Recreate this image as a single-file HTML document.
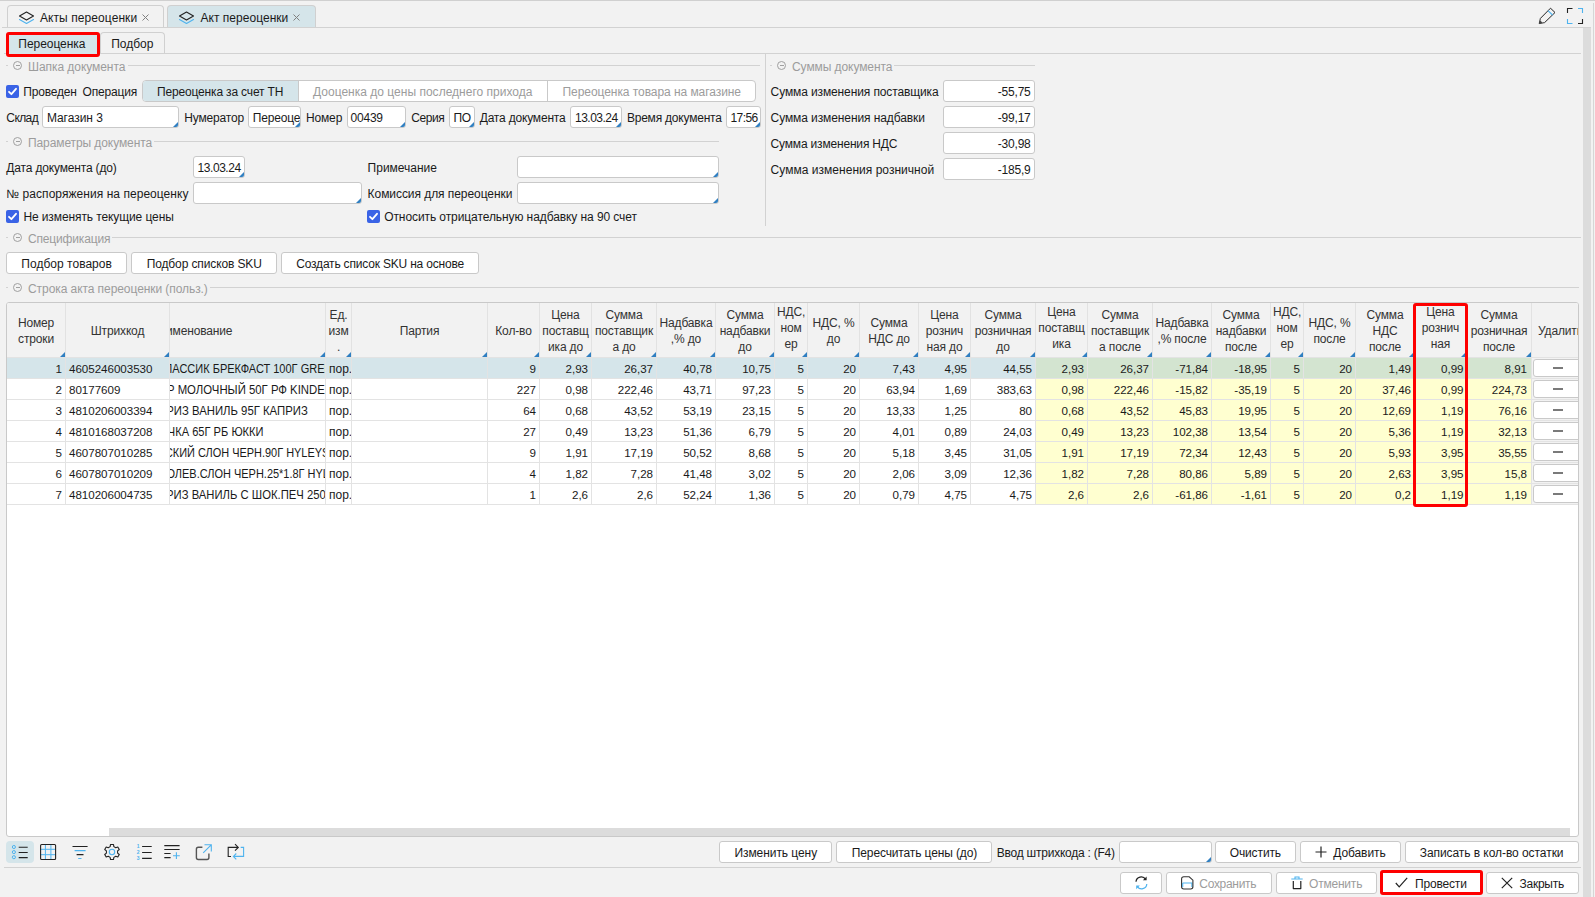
<!DOCTYPE html><html lang="ru"><head><meta charset="utf-8"><title>Акт переоценки</title><style>
*{box-sizing:border-box;margin:0;padding:0}
html,body{width:1595px;height:897px;overflow:hidden;background:#f2f2f2}
body{font-family:"Liberation Sans",sans-serif;font-size:12px;color:#1a1a1a;position:relative}
.a{position:absolute;white-space:nowrap}
.t{position:absolute;white-space:pre;line-height:16px;height:16px}
.g{color:#9c9c9c}
.hl{position:absolute;height:1px;background:#d2d2d2}
.vl{position:absolute;width:1px;background:#d2d2d2}
.in{position:absolute;background:#fff;border:1px solid #c9c9c9;border-radius:3px;height:22px;overflow:hidden}
.in.m:after,.th.m:after{content:"";position:absolute;right:0;bottom:0;border-style:solid;border-width:0 0 5px 5px;border-color:transparent transparent #2f7fc1 transparent}
.btn{position:absolute;background:#fff;border:1px solid #c9c9c9;border-radius:3px;height:22px}
.cb{position:absolute;width:13px;height:13px;border-radius:2px;background:#3a63e6}
.cb svg{position:absolute;left:0;top:0}
.circ{position:absolute;width:9px;height:9px;border:1px solid #a0a0a0;border-radius:50%}
.circ:after{content:"";position:absolute;left:1.5px;top:3px;width:4px;height:1px;background:#a0a0a0}
.th{position:absolute;top:0;height:55px;color:#333;text-align:center;line-height:16px;display:flex;align-items:center;justify-content:center;border-right:1px solid #e2e2e2;border-bottom:1px solid #e3e3e3;overflow:hidden;white-space:nowrap;letter-spacing:-0.15px;padding-top:2px}
.td{position:absolute;height:21px;line-height:22px;border-right:1px solid #e3e3e3;border-bottom:1px solid #e3e3e3;overflow:hidden;white-space:pre;padding:0 3px}
.n{font-size:11.6px;letter-spacing:-0.03px}
.td.r{text-align:right}
.y{background:#ffffd0}
.sel{background:#d5e5ea}
.sel.y{background:#d3e4d0}
.del{position:absolute;left:1px;top:1px;width:60px;height:18px;background:#fff;border:1px solid #c9c9c9;border-radius:3px}
.del:after{content:"";position:absolute;left:19px;top:7px;width:10px;height:2px;background:#7a7a7a}
</style></head><body>
<div class="hl" style="left:0px;top:0px;width:1595px;background:#d0d0d0"></div>
<div class="a" style="left:7px;top:5px;width:157px;height:23px;border:1px solid #d0d0d0;border-bottom:none;border-radius:4px 4px 0 0;background:#f2f2f2"></div>
<svg class="a" style="left:17.5px;top:10.5px" width="17" height="14" viewBox="0 0 17 14"><path d="M8.5 1 L15.5 5 L8.5 9 L1.5 5 Z" fill="none" stroke="#222" stroke-width="1.1" stroke-linejoin="round"/><path d="M1.5 8.5 L8.5 12.5 L15.5 8.5" fill="none" stroke="#4fb3ee" stroke-width="1.1" stroke-linejoin="round" stroke-linecap="round"/></svg>
<div class="t " style="left:40px;top:10px;letter-spacing:0.078px;">Акты переоценки</div>
<svg class="a" style="left:142px;top:14px" width="7" height="7" viewBox="0 0 7 7"><path d="M0.5 0.5 L6.5 6.5 M6.5 0.5 L0.5 6.5" stroke="#808080" stroke-width="1"/></svg>
<div class="a" style="left:167px;top:5px;width:149px;height:23px;border:1px solid #d0d0d0;border-bottom:none;border-radius:4px 4px 0 0;background:#d5e5ea"></div>
<svg class="a" style="left:177.5px;top:10.5px" width="17" height="14" viewBox="0 0 17 14"><path d="M8.5 1 L15.5 5 L8.5 9 L1.5 5 Z" fill="none" stroke="#222" stroke-width="1.1" stroke-linejoin="round"/><path d="M1.5 8.5 L8.5 12.5 L15.5 8.5" fill="none" stroke="#4fb3ee" stroke-width="1.1" stroke-linejoin="round" stroke-linecap="round"/></svg>
<div class="t " style="left:200.5px;top:10px;letter-spacing:0.028px;">Акт переоценки</div>
<svg class="a" style="left:293px;top:14px" width="7" height="7" viewBox="0 0 7 7"><path d="M0.5 0.5 L6.5 6.5 M6.5 0.5 L0.5 6.5" stroke="#808080" stroke-width="1"/></svg>
<div class="hl" style="left:2px;top:27px;width:1589px;"></div>
<svg class="a" style="left:1530px;top:0" width="60" height="28" viewBox="1530 0 60 28"><path d="M1540.4 18.4 L1550.5 8.2 L1555 12.5 L1544.6 22.6" fill="none" stroke="#222" stroke-width="1" stroke-linejoin="miter"/><path d="M1540.4 18.4 L1539.2 23.6 L1544.6 22.6" fill="none" stroke="#333" stroke-width="1" stroke-linejoin="round"/><path d="M1539.3 23.5 L1540 20.6 Q1541.6 21.2 1542.4 22.9 Z" fill="#444"/><path d="M1548 10.7 L1552.5 15" stroke="#4fb3ee" stroke-width="1.1"/><path d="M1567.5 13 V8.5 H1572.5" fill="none" stroke="#222" stroke-width="1.1"/><path d="M1578 8.5 H1582.5 V13" fill="none" stroke="#4fb3ee" stroke-width="1.1"/><path d="M1582.5 19 V23.5 H1578" fill="none" stroke="#222" stroke-width="1.1"/><path d="M1572.5 23.5 H1567.5 V19" fill="none" stroke="#4fb3ee" stroke-width="1.1"/></svg>
<div class="a" style="left:100px;top:32px;width:65px;height:22px;border:1px solid #d0d0d0;border-bottom:none;border-radius:4px 4px 0 0"></div>
<div class="t " style="left:111.2px;top:36px;letter-spacing:0.006px;">Подбор</div>
<div class="hl" style="left:4px;top:53px;width:1577px;"></div>
<div class="a" style="left:6px;top:32px;width:94px;height:25px;border:3px solid #fe0000;border-radius:3px;background:#d5e5ea"></div>
<div class="t " style="left:18.3px;top:36px;letter-spacing:-0.045px;">Переоценка</div>
<div class="a" style="left:1583px;top:28px;width:8px;height:869px;background:#dcdcdc"></div>
<div class="vl" style="left:1593px;top:3px;height:894px;background:#d6d6d6"></div>
<div class="hl" style="left:6px;top:65px;width:2px"></div>
<div class="circ" style="left:13px;top:61px"></div>
<div class="t g" style="left:28px;top:59px;letter-spacing:-0.060px;">Шапка документа</div>
<div class="hl" style="left:128px;top:65px;width:632px;"></div>
<div class="vl" style="left:765px;top:54px;height:172px;"></div>
<div class="hl" style="left:770px;top:65px;width:2px"></div>
<div class="circ" style="left:777px;top:61px"></div>
<div class="t g" style="left:792px;top:59px;letter-spacing:-0.074px;">Суммы документа</div>
<div class="hl" style="left:894px;top:65px;width:141px;"></div>
<div class="cb" style="left:6px;top:85px"><svg width="13" height="13" viewBox="0 0 13 13"><path d="M3 6.8 L5.4 9.2 L10 3.8" fill="none" stroke="#fff" stroke-width="1.8" stroke-linecap="round" stroke-linejoin="round"/></svg></div>
<div class="t " style="left:23.3px;top:84px;letter-spacing:-0.205px;">Проведен</div>
<div class="t " style="left:82.6px;top:84px;letter-spacing:-0.167px;">Операция</div>
<div class="a" style="left:142px;top:80px;width:614px;height:22px;border:1px solid #c9c9c9;border-radius:4px;background:#fff;overflow:hidden"><div class="a" style="left:0;top:0;width:156px;height:20px;background:#d5e5ea;border-right:1px solid #c9c9c9"></div><div class="a" style="left:404px;top:0;width:1px;height:20px;background:#c9c9c9"></div></div>
<div class="t " style="left:157px;top:84px;letter-spacing:-0.162px;">Переоценка за счет ТН</div>
<div class="t g" style="left:313px;top:84px;letter-spacing:0.014px;">Дооценка до цены последнего прихода</div>
<div class="t g" style="left:562.5px;top:84px;letter-spacing:-0.060px;">Переоценка товара на магазине</div>
<div class="t " style="left:6.3px;top:110px;letter-spacing:-0.587px;">Склад</div>
<div class="in m" style="left:42px;top:106px;width:137px"></div>
<div class="a" style="left:43px;top:106px;width:135px;height:22px;overflow:hidden">
<div class="t" style="left:3.8999999999999986px;top:4px;letter-spacing:-0.044px;">Магазин 3</div></div>
<div class="t " style="left:184.3px;top:110px;letter-spacing:-0.172px;">Нумератор</div>
<div class="in m" style="left:248px;top:106px;width:53px"></div>
<div class="a" style="left:249px;top:106px;width:51px;height:22px;overflow:hidden"><div class="t" style="left:3.7px;top:4px;letter-spacing:-0.176px">Переоценка</div></div>
<div class="t " style="left:305.9px;top:110px;letter-spacing:-0.127px;">Номер</div>
<div class="in m" style="left:347px;top:106px;width:59px"></div>
<div class="a" style="left:348px;top:106px;width:57px;height:22px;overflow:hidden">
<div class="t" style="left:2.5px;top:4px;letter-spacing:-0.215px;">00439</div></div>
<div class="t " style="left:411.3px;top:110px;letter-spacing:-0.424px;">Серия</div>
<div class="in m" style="left:449px;top:106px;width:26px"></div>
<div class="a" style="left:450px;top:106px;width:24px;height:22px;overflow:hidden">
<div class="t" style="left:3.3999999999999773px;top:4px;letter-spacing:-0.184px;">ПО</div></div>
<div class="t " style="left:479.7px;top:110px;letter-spacing:-0.187px;">Дата документа</div>
<div class="in m" style="left:570px;top:106px;width:52px"></div>
<div class="a" style="left:571px;top:106px;width:50px;height:22px;overflow:hidden">
<div class="t" style="left:4px;top:4px;letter-spacing:-0.515px;">13.03.24</div></div>
<div class="t " style="left:626.9px;top:110px;letter-spacing:-0.210px;">Время документа</div>
<div class="in m" style="left:726px;top:106px;width:35px"></div>
<div class="a" style="left:727px;top:106px;width:33px;height:22px;overflow:hidden">
<div class="t" style="left:3.3999999999999773px;top:4px;letter-spacing:-0.546px;">17:56</div></div>
<div class="hl" style="left:6px;top:141px;width:2px"></div>
<div class="circ" style="left:13px;top:137px"></div>
<div class="t g" style="left:28px;top:135px;letter-spacing:-0.095px;">Параметры документа</div>
<div class="hl" style="left:154px;top:141px;width:565px;"></div>
<div class="t " style="left:6.3px;top:160px;letter-spacing:-0.164px;">Дата документа (до)</div>
<div class="in m" style="left:193px;top:156px;width:52px"></div>
<div class="a" style="left:194px;top:156px;width:50px;height:22px;overflow:hidden">
<div class="t" style="left:3.5999999999999943px;top:4px;letter-spacing:-0.452px;">13.03.24</div></div>
<div class="t " style="left:367.6px;top:160px;letter-spacing:-0.007px;">Примечание</div>
<div class="in m" style="left:517px;top:156px;width:202px"></div>
<div class="t " style="left:6.3px;top:186px;letter-spacing:0.047px;">№ распоряжения на переоценку</div>
<div class="in m" style="left:193px;top:182px;width:169px"></div>
<div class="t " style="left:367.6px;top:186px;letter-spacing:-0.060px;">Комиссия для переоценки</div>
<div class="in m" style="left:517px;top:182px;width:202px"></div>
<div class="cb" style="left:6px;top:210px"><svg width="13" height="13" viewBox="0 0 13 13"><path d="M3 6.8 L5.4 9.2 L10 3.8" fill="none" stroke="#fff" stroke-width="1.8" stroke-linecap="round" stroke-linejoin="round"/></svg></div>
<div class="t " style="left:23.4px;top:209px;letter-spacing:-0.099px;">Не изменять текущие цены</div>
<div class="cb" style="left:367px;top:210px"><svg width="13" height="13" viewBox="0 0 13 13"><path d="M3 6.8 L5.4 9.2 L10 3.8" fill="none" stroke="#fff" stroke-width="1.8" stroke-linecap="round" stroke-linejoin="round"/></svg></div>
<div class="t " style="left:384.2px;top:209px;letter-spacing:-0.084px;">Относить отрицательную надбавку на 90 счет</div>
<div class="t " style="left:770.6px;top:84px;letter-spacing:-0.115px;">Сумма изменения поставщика</div>
<div class="in " style="left:943px;top:80px;width:92px"></div>
<div class="t" style="left:944px;top:84px;width:86.6px;text-align:right;letter-spacing:-0.2px">-55,75</div>
<div class="t " style="left:770.6px;top:110px;letter-spacing:-0.098px;">Сумма изменения надбавки</div>
<div class="in " style="left:943px;top:106px;width:92px"></div>
<div class="t" style="left:944px;top:110px;width:86.6px;text-align:right;letter-spacing:-0.2px">-99,17</div>
<div class="t " style="left:770.6px;top:136px;letter-spacing:-0.179px;">Сумма изменения НДС</div>
<div class="in " style="left:943px;top:132px;width:92px"></div>
<div class="t" style="left:944px;top:136px;width:86.6px;text-align:right;letter-spacing:-0.2px">-30,98</div>
<div class="t " style="left:770.6px;top:162px;letter-spacing:0.027px;">Сумма изменения розничной</div>
<div class="in " style="left:943px;top:158px;width:92px"></div>
<div class="t" style="left:944px;top:162px;width:86.6px;text-align:right;letter-spacing:-0.2px">-185,9</div>
<div class="hl" style="left:6px;top:237px;width:2px"></div>
<div class="circ" style="left:13px;top:233px"></div>
<div class="t g" style="left:28px;top:231px;letter-spacing:-0.164px;">Спецификация</div>
<div class="hl" style="left:112px;top:237px;width:1469px;"></div>
<div class="btn" style="left:6px;top:252px;width:121px"></div>
<div class="t " style="left:21.3px;top:256px;letter-spacing:0.024px;">Подбор товаров</div>
<div class="btn" style="left:131px;top:252px;width:146px"></div>
<div class="t " style="left:146.7px;top:256px;letter-spacing:-0.119px;">Подбор списков SKU</div>
<div class="btn" style="left:281px;top:252px;width:198px"></div>
<div class="t " style="left:296.2px;top:256px;letter-spacing:-0.188px;">Создать список SKU на основе</div>
<div class="hl" style="left:6px;top:287px;width:2px"></div>
<div class="circ" style="left:13px;top:283px"></div>
<div class="t g" style="left:28px;top:281px;letter-spacing:-0.070px;">Строка акта переоценки (польз.)</div>
<div class="hl" style="left:210px;top:287px;width:1369px;"></div>
<div class="a" style="left:6px;top:302px;width:1573px;height:535px;border:1px solid #c9c9c9;border-radius:3px;background:#fff;overflow:hidden">
<div class="a" style="left:0;top:0;width:1573px;height:55px;background:#f2f2f2"></div>
<div class="th m" style="left:0px;width:59px;">Номер<br>строки</div>
<div class="th m" style="left:59px;width:104px;">Штрихкод</div>
<div class="th m" style="left:163px;width:156px;justify-content:flex-start"><span style="margin-left:-19px">Наименование</span></div>
<div class="th m" style="left:319px;width:26px;">Ед.<br>изм<br>.</div>
<div class="th m" style="left:345px;width:136px;">Партия</div>
<div class="th m" style="left:481px;width:52px;">Кол-во</div>
<div class="th m" style="left:533px;width:52px;">Цена<br>поставщ<br>ика до</div>
<div class="th m" style="left:585px;width:65px;">Сумма<br>поставщик<br>а до</div>
<div class="th m" style="left:650px;width:59px;">Надбавка<br>,% до</div>
<div class="th m" style="left:709px;width:59px;">Сумма<br>надбавки<br>до</div>
<div class="th m" style="left:768px;width:33px;padding-bottom:6px;">НДС,<br>ном<br>ер</div>
<div class="th m" style="left:801px;width:52px;">НДС, %<br>до</div>
<div class="th m" style="left:853px;width:59px;">Сумма<br>НДС до</div>
<div class="th m" style="left:912px;width:52px;">Цена<br>рознич<br>ная до</div>
<div class="th m" style="left:964px;width:65px;">Сумма<br>розничная<br>до</div>
<div class="th m" style="left:1029px;width:52px;padding-bottom:6px;">Цена<br>поставщ<br>ика</div>
<div class="th m" style="left:1081px;width:65px;">Сумма<br>поставщик<br>а после</div>
<div class="th m" style="left:1146px;width:59px;">Надбавка<br>,% после</div>
<div class="th m" style="left:1205px;width:59px;">Сумма<br>надбавки<br>после</div>
<div class="th m" style="left:1264px;width:33px;padding-bottom:6px;">НДС,<br>ном<br>ер</div>
<div class="th m" style="left:1297px;width:52px;">НДС, %<br>после</div>
<div class="th m" style="left:1349px;width:59px;">Сумма<br>НДС<br>после</div>
<div class="th m" style="left:1408px;width:52px;padding-bottom:6px;">Цена<br>рознич<br>ная</div>
<div class="th m" style="left:1460px;width:65px;">Сумма<br>розничная<br>после</div>
<div class="th" style="left:1525px;width:60px;border-right:none;justify-content:flex-start;padding-left:6px">Удалить</div>
<div class="td sel r n" style="left:0px;top:55px;width:59px;">1</div>
<div class="td sel n" style="left:59px;top:55px;width:104px;padding:0 0 0 3px">4605246003530</div>
<div class="td sel" style="left:163px;top:55px;width:156px;padding:0"><span style="display:inline-block;transform-origin:0 50%;transform:scaleX(0.9176);margin-left:-37.30px">ЧАЙ КЛАССИК БРЕКФАСТ 100Г GREENFIELD</span></div>
<div class="td sel" style="left:319px;top:55px;width:26px;padding:0 0 0 3px">пор.</div>
<div class="td sel r n" style="left:345px;top:55px;width:136px;"></div>
<div class="td sel r n" style="left:481px;top:55px;width:52px;">9</div>
<div class="td sel r n" style="left:533px;top:55px;width:52px;">2,93</div>
<div class="td sel r n" style="left:585px;top:55px;width:65px;">26,37</div>
<div class="td sel r n" style="left:650px;top:55px;width:59px;">40,78</div>
<div class="td sel r n" style="left:709px;top:55px;width:59px;">10,75</div>
<div class="td sel r n" style="left:768px;top:55px;width:33px;">5</div>
<div class="td sel r n" style="left:801px;top:55px;width:52px;">20</div>
<div class="td sel r n" style="left:853px;top:55px;width:59px;">7,43</div>
<div class="td sel r n" style="left:912px;top:55px;width:52px;">4,95</div>
<div class="td sel r n" style="left:964px;top:55px;width:65px;">44,55</div>
<div class="td sel y r n" style="left:1029px;top:55px;width:52px;">2,93</div>
<div class="td sel y r n" style="left:1081px;top:55px;width:65px;">26,37</div>
<div class="td sel y r n" style="left:1146px;top:55px;width:59px;">-71,84</div>
<div class="td sel y r n" style="left:1205px;top:55px;width:59px;">-18,95</div>
<div class="td sel y r n" style="left:1264px;top:55px;width:33px;">5</div>
<div class="td sel y r n" style="left:1297px;top:55px;width:52px;">20</div>
<div class="td sel y r n" style="left:1349px;top:55px;width:59px;">1,49</div>
<div class="td sel y r n" style="left:1408px;top:55px;width:52px;padding-right:2.5px;">0,99</div>
<div class="td sel y r n" style="left:1460px;top:55px;width:65px;padding-right:4px;">8,91</div>
<div class="td sel" style="left:1525px;top:55px;width:60px;border-right:none;background:#f2f2f2"><div class="del"></div></div>
<div class="td r n" style="left:0px;top:76px;width:59px;">2</div>
<div class="td n" style="left:59px;top:76px;width:104px;padding:0 0 0 3px">80177609</div>
<div class="td" style="left:163px;top:76px;width:156px;padding:0"><span style="display:inline-block;transform-origin:0 50%;transform:scaleX(0.9461);margin-left:-102.33px">ШОКОЛАД КИНДЕР МОЛОЧНЫЙ 50Г РФ KINDER</span></div>
<div class="td" style="left:319px;top:76px;width:26px;padding:0 0 0 3px">пор.</div>
<div class="td r n" style="left:345px;top:76px;width:136px;"></div>
<div class="td r n" style="left:481px;top:76px;width:52px;">227</div>
<div class="td r n" style="left:533px;top:76px;width:52px;">0,98</div>
<div class="td r n" style="left:585px;top:76px;width:65px;">222,46</div>
<div class="td r n" style="left:650px;top:76px;width:59px;">43,71</div>
<div class="td r n" style="left:709px;top:76px;width:59px;">97,23</div>
<div class="td r n" style="left:768px;top:76px;width:33px;">5</div>
<div class="td r n" style="left:801px;top:76px;width:52px;">20</div>
<div class="td r n" style="left:853px;top:76px;width:59px;">63,94</div>
<div class="td r n" style="left:912px;top:76px;width:52px;">1,69</div>
<div class="td r n" style="left:964px;top:76px;width:65px;">383,63</div>
<div class="td y r n" style="left:1029px;top:76px;width:52px;">0,98</div>
<div class="td y r n" style="left:1081px;top:76px;width:65px;">222,46</div>
<div class="td y r n" style="left:1146px;top:76px;width:59px;">-15,82</div>
<div class="td y r n" style="left:1205px;top:76px;width:59px;">-35,19</div>
<div class="td y r n" style="left:1264px;top:76px;width:33px;">5</div>
<div class="td y r n" style="left:1297px;top:76px;width:52px;">20</div>
<div class="td y r n" style="left:1349px;top:76px;width:59px;">37,46</div>
<div class="td y r n" style="left:1408px;top:76px;width:52px;padding-right:2.5px;">0,99</div>
<div class="td y r n" style="left:1460px;top:76px;width:65px;padding-right:4px;">224,73</div>
<div class="td" style="left:1525px;top:76px;width:60px;border-right:none;background:#f2f2f2"><div class="del"></div></div>
<div class="td r n" style="left:0px;top:97px;width:59px;">3</div>
<div class="td n" style="left:59px;top:97px;width:104px;padding:0 0 0 3px">4810206003394</div>
<div class="td" style="left:163px;top:97px;width:156px;padding:0"><span style="display:inline-block;transform-origin:0 50%;transform:scaleX(0.9447);margin-left:-70.07px">СЫРОК КАПРИЗ ВАНИЛЬ 95Г КАПРИЗ</span></div>
<div class="td" style="left:319px;top:97px;width:26px;padding:0 0 0 3px">пор.</div>
<div class="td r n" style="left:345px;top:97px;width:136px;"></div>
<div class="td r n" style="left:481px;top:97px;width:52px;">64</div>
<div class="td r n" style="left:533px;top:97px;width:52px;">0,68</div>
<div class="td r n" style="left:585px;top:97px;width:65px;">43,52</div>
<div class="td r n" style="left:650px;top:97px;width:59px;">53,19</div>
<div class="td r n" style="left:709px;top:97px;width:59px;">23,15</div>
<div class="td r n" style="left:768px;top:97px;width:33px;">5</div>
<div class="td r n" style="left:801px;top:97px;width:52px;">20</div>
<div class="td r n" style="left:853px;top:97px;width:59px;">13,33</div>
<div class="td r n" style="left:912px;top:97px;width:52px;">1,25</div>
<div class="td r n" style="left:964px;top:97px;width:65px;">80</div>
<div class="td y r n" style="left:1029px;top:97px;width:52px;">0,68</div>
<div class="td y r n" style="left:1081px;top:97px;width:65px;">43,52</div>
<div class="td y r n" style="left:1146px;top:97px;width:59px;">45,83</div>
<div class="td y r n" style="left:1205px;top:97px;width:59px;">19,95</div>
<div class="td y r n" style="left:1264px;top:97px;width:33px;">5</div>
<div class="td y r n" style="left:1297px;top:97px;width:52px;">20</div>
<div class="td y r n" style="left:1349px;top:97px;width:59px;">12,69</div>
<div class="td y r n" style="left:1408px;top:97px;width:52px;padding-right:2.5px;">1,19</div>
<div class="td y r n" style="left:1460px;top:97px;width:65px;padding-right:4px;">76,16</div>
<div class="td" style="left:1525px;top:97px;width:60px;border-right:none;background:#f2f2f2"><div class="del"></div></div>
<div class="td r n" style="left:0px;top:118px;width:59px;">4</div>
<div class="td n" style="left:59px;top:118px;width:104px;padding:0 0 0 3px">4810168037208</div>
<div class="td" style="left:163px;top:118px;width:156px;padding:0"><span style="display:inline-block;transform-origin:0 50%;transform:scaleX(0.9251);margin-left:-25.82px">ЖВАЧКА 65Г РБ ЮККИ</span></div>
<div class="td" style="left:319px;top:118px;width:26px;padding:0 0 0 3px">пор.</div>
<div class="td r n" style="left:345px;top:118px;width:136px;"></div>
<div class="td r n" style="left:481px;top:118px;width:52px;">27</div>
<div class="td r n" style="left:533px;top:118px;width:52px;">0,49</div>
<div class="td r n" style="left:585px;top:118px;width:65px;">13,23</div>
<div class="td r n" style="left:650px;top:118px;width:59px;">51,36</div>
<div class="td r n" style="left:709px;top:118px;width:59px;">6,79</div>
<div class="td r n" style="left:768px;top:118px;width:33px;">5</div>
<div class="td r n" style="left:801px;top:118px;width:52px;">20</div>
<div class="td r n" style="left:853px;top:118px;width:59px;">4,01</div>
<div class="td r n" style="left:912px;top:118px;width:52px;">0,89</div>
<div class="td r n" style="left:964px;top:118px;width:65px;">24,03</div>
<div class="td y r n" style="left:1029px;top:118px;width:52px;">0,49</div>
<div class="td y r n" style="left:1081px;top:118px;width:65px;">13,23</div>
<div class="td y r n" style="left:1146px;top:118px;width:59px;">102,38</div>
<div class="td y r n" style="left:1205px;top:118px;width:59px;">13,54</div>
<div class="td y r n" style="left:1264px;top:118px;width:33px;">5</div>
<div class="td y r n" style="left:1297px;top:118px;width:52px;">20</div>
<div class="td y r n" style="left:1349px;top:118px;width:59px;">5,36</div>
<div class="td y r n" style="left:1408px;top:118px;width:52px;padding-right:2.5px;">1,19</div>
<div class="td y r n" style="left:1460px;top:118px;width:65px;padding-right:4px;">32,13</div>
<div class="td" style="left:1525px;top:118px;width:60px;border-right:none;background:#f2f2f2"><div class="del"></div></div>
<div class="td r n" style="left:0px;top:139px;width:59px;">5</div>
<div class="td n" style="left:59px;top:139px;width:104px;padding:0 0 0 3px">4607807010285</div>
<div class="td" style="left:163px;top:139px;width:156px;padding:0"><span style="display:inline-block;transform-origin:0 50%;transform:scaleX(0.9120);margin-left:-73.84px">ЧАЙ АНГЛИЙСКИЙ СЛОН ЧЕРН.90Г HYLEYS</span></div>
<div class="td" style="left:319px;top:139px;width:26px;padding:0 0 0 3px">пор.</div>
<div class="td r n" style="left:345px;top:139px;width:136px;"></div>
<div class="td r n" style="left:481px;top:139px;width:52px;">9</div>
<div class="td r n" style="left:533px;top:139px;width:52px;">1,91</div>
<div class="td r n" style="left:585px;top:139px;width:65px;">17,19</div>
<div class="td r n" style="left:650px;top:139px;width:59px;">50,52</div>
<div class="td r n" style="left:709px;top:139px;width:59px;">8,68</div>
<div class="td r n" style="left:768px;top:139px;width:33px;">5</div>
<div class="td r n" style="left:801px;top:139px;width:52px;">20</div>
<div class="td r n" style="left:853px;top:139px;width:59px;">5,18</div>
<div class="td r n" style="left:912px;top:139px;width:52px;">3,45</div>
<div class="td r n" style="left:964px;top:139px;width:65px;">31,05</div>
<div class="td y r n" style="left:1029px;top:139px;width:52px;">1,91</div>
<div class="td y r n" style="left:1081px;top:139px;width:65px;">17,19</div>
<div class="td y r n" style="left:1146px;top:139px;width:59px;">72,34</div>
<div class="td y r n" style="left:1205px;top:139px;width:59px;">12,43</div>
<div class="td y r n" style="left:1264px;top:139px;width:33px;">5</div>
<div class="td y r n" style="left:1297px;top:139px;width:52px;">20</div>
<div class="td y r n" style="left:1349px;top:139px;width:59px;">5,93</div>
<div class="td y r n" style="left:1408px;top:139px;width:52px;padding-right:2.5px;">3,95</div>
<div class="td y r n" style="left:1460px;top:139px;width:65px;padding-right:4px;">35,55</div>
<div class="td" style="left:1525px;top:139px;width:60px;border-right:none;background:#f2f2f2"><div class="del"></div></div>
<div class="td r n" style="left:0px;top:160px;width:59px;">6</div>
<div class="td n" style="left:59px;top:160px;width:104px;padding:0 0 0 3px">4607807010209</div>
<div class="td" style="left:163px;top:160px;width:156px;padding:0"><span style="display:inline-block;transform-origin:0 50%;transform:scaleX(0.9140);margin-left:-50.57px">ЧАЙ КОРОЛЕВ.СЛОН ЧЕРН.25*1.8Г HYLEYS</span></div>
<div class="td" style="left:319px;top:160px;width:26px;padding:0 0 0 3px">пор.</div>
<div class="td r n" style="left:345px;top:160px;width:136px;"></div>
<div class="td r n" style="left:481px;top:160px;width:52px;">4</div>
<div class="td r n" style="left:533px;top:160px;width:52px;">1,82</div>
<div class="td r n" style="left:585px;top:160px;width:65px;">7,28</div>
<div class="td r n" style="left:650px;top:160px;width:59px;">41,48</div>
<div class="td r n" style="left:709px;top:160px;width:59px;">3,02</div>
<div class="td r n" style="left:768px;top:160px;width:33px;">5</div>
<div class="td r n" style="left:801px;top:160px;width:52px;">20</div>
<div class="td r n" style="left:853px;top:160px;width:59px;">2,06</div>
<div class="td r n" style="left:912px;top:160px;width:52px;">3,09</div>
<div class="td r n" style="left:964px;top:160px;width:65px;">12,36</div>
<div class="td y r n" style="left:1029px;top:160px;width:52px;">1,82</div>
<div class="td y r n" style="left:1081px;top:160px;width:65px;">7,28</div>
<div class="td y r n" style="left:1146px;top:160px;width:59px;">80,86</div>
<div class="td y r n" style="left:1205px;top:160px;width:59px;">5,89</div>
<div class="td y r n" style="left:1264px;top:160px;width:33px;">5</div>
<div class="td y r n" style="left:1297px;top:160px;width:52px;">20</div>
<div class="td y r n" style="left:1349px;top:160px;width:59px;">2,63</div>
<div class="td y r n" style="left:1408px;top:160px;width:52px;padding-right:2.5px;">3,95</div>
<div class="td y r n" style="left:1460px;top:160px;width:65px;padding-right:4px;">15,8</div>
<div class="td" style="left:1525px;top:160px;width:60px;border-right:none;background:#f2f2f2"><div class="del"></div></div>
<div class="td r n" style="left:0px;top:181px;width:59px;">7</div>
<div class="td n" style="left:59px;top:181px;width:104px;padding:0 0 0 3px">4810206004735</div>
<div class="td" style="left:163px;top:181px;width:156px;padding:0"><span style="display:inline-block;transform-origin:0 50%;transform:scaleX(0.9409);margin-left:-69.77px">СЫРОК КАПРИЗ ВАНИЛЬ С ШОК.ПЕЧ 250Г</span></div>
<div class="td" style="left:319px;top:181px;width:26px;padding:0 0 0 3px">пор.</div>
<div class="td r n" style="left:345px;top:181px;width:136px;"></div>
<div class="td r n" style="left:481px;top:181px;width:52px;">1</div>
<div class="td r n" style="left:533px;top:181px;width:52px;">2,6</div>
<div class="td r n" style="left:585px;top:181px;width:65px;">2,6</div>
<div class="td r n" style="left:650px;top:181px;width:59px;">52,24</div>
<div class="td r n" style="left:709px;top:181px;width:59px;">1,36</div>
<div class="td r n" style="left:768px;top:181px;width:33px;">5</div>
<div class="td r n" style="left:801px;top:181px;width:52px;">20</div>
<div class="td r n" style="left:853px;top:181px;width:59px;">0,79</div>
<div class="td r n" style="left:912px;top:181px;width:52px;">4,75</div>
<div class="td r n" style="left:964px;top:181px;width:65px;">4,75</div>
<div class="td y r n" style="left:1029px;top:181px;width:52px;">2,6</div>
<div class="td y r n" style="left:1081px;top:181px;width:65px;">2,6</div>
<div class="td y r n" style="left:1146px;top:181px;width:59px;">-61,86</div>
<div class="td y r n" style="left:1205px;top:181px;width:59px;">-1,61</div>
<div class="td y r n" style="left:1264px;top:181px;width:33px;">5</div>
<div class="td y r n" style="left:1297px;top:181px;width:52px;">20</div>
<div class="td y r n" style="left:1349px;top:181px;width:59px;">0,2</div>
<div class="td y r n" style="left:1408px;top:181px;width:52px;padding-right:2.5px;">1,19</div>
<div class="td y r n" style="left:1460px;top:181px;width:65px;padding-right:4px;">1,19</div>
<div class="td" style="left:1525px;top:181px;width:60px;border-right:none;background:#f2f2f2"><div class="del"></div></div>
<div class="a" style="left:102px;top:525px;width:1461px;height:8px;background:#dcdcdc"></div>
</div>
<div class="a" style="left:1413px;top:303px;width:55px;height:204px;border:3px solid #fe0000;border-radius:3px"></div>
<div class="a" style="left:6px;top:841px;width:28px;height:22px;background:#d5e5ea;border-radius:4px"></div>
<svg class="a" style="left:0;top:836px" width="260" height="32" viewBox="0 836 260 32" fill="none"><g stroke="#4fb3ee" stroke-width="1"><circle cx="13.9" cy="847" r="1.55"/><circle cx="13.9" cy="852.1" r="1.55"/><circle cx="13.9" cy="857.2" r="1.55"/></g><path d="M18.7 847.3 H27.7 M18.7 852.5 H27.7 M18.7 857.6 H27.7" stroke="#222" stroke-width="1.1"/><path d="M45.4 844.5 V859.5 M50.9 844.5 V859.5 M40.5 849.3 H55.5 M40.5 854.7 H55.5" stroke="#4fb3ee" stroke-width="1"/><rect x="40.6" y="844.5" width="15" height="15" rx="1" stroke="#222" stroke-width="1.1"/><path d="M72.5 846.5 H87.6 M76.6 854.6 H83.5" stroke="#222" stroke-width="1.1"/><path d="M74.6 850.6 H85.6 M78.2 858.5 H81.5" stroke="#4fb3ee" stroke-width="1.1"/><circle cx="112" cy="852" r="2.7" stroke="#4fb3ee" stroke-width="1.1"/><path d="M113.86 846.61 L113.47 844.44 L110.53 844.44 L110.14 846.61 L108.26 847.70 L106.19 846.95 L104.72 849.49 L106.40 850.91 L106.40 853.09 L104.72 854.51 L106.19 857.05 L108.26 856.30 L110.14 857.39 L110.53 859.56 L113.47 859.56 L113.86 857.39 L115.74 856.30 L117.81 857.05 L119.28 854.51 L117.60 853.09 L117.60 850.91 L119.28 849.49 L117.81 846.95 L115.74 847.70 Z" stroke="#222" stroke-width="1.1" stroke-linejoin="round"/><path d="M142.1 846.5 H151.7 M142.1 852.5 H151.7 M142.1 858.4 H151.7" stroke="#222" stroke-width="1.1"/><g font-family="Liberation Sans, sans-serif" font-size="5" font-weight="bold" fill="#4fb3ee"><text x="136.8" y="848.3">1</text><text x="136.8" y="854.3">2</text><text x="136.8" y="860.2">3</text></g><path d="M164.3 845.6 H179.6 M164.3 849.5 H179.6 M164.3 853.5 H170.6 M164.3 857.6 H170.6" stroke="#222" stroke-width="1.1"/><path d="M173 855.7 H179.8 M176.4 852.3 V859.1" stroke="#4fb3ee" stroke-width="1.1"/><path d="M202.4 847.3 H198.3 Q196.4 847.3 196.4 849.2 V857.6 Q196.4 859.5 198.3 859.5 H207 Q208.9 859.5 208.9 857.6 V853.5" stroke="#555" stroke-width="1.4"/><path d="M203.2 852.8 L211.2 844.8 M204.5 844.7 H211.3 V851.5" stroke="#4fb3ee" stroke-width="1.1"/><path d="M231 856.5 H228.2 V847.4 H238 M235 844.2 L238.3 847.4 L235 850.6" stroke="#222" stroke-width="1.1"/><path d="M240.7 847.4 H243.6 V856.4 H233.8 M236.3 853.5 L233.4 856.4 L236.3 859.3" stroke="#4fb3ee" stroke-width="1.1"/></svg>
<div class="btn" style="left:719px;top:841px;width:113px"></div>
<div class="t " style="left:734.4px;top:845px;letter-spacing:-0.063px;">Изменить цену</div>
<div class="btn" style="left:836px;top:841px;width:156px"></div>
<div class="t " style="left:851.8px;top:845px;letter-spacing:-0.129px;">Пересчитать цены (до)</div>
<div class="t " style="left:996.8px;top:845px;letter-spacing:-0.237px;">Ввод штрихкода : (F4)</div>
<div class="in m" style="left:1119px;top:841px;width:93px"></div>
<div class="btn" style="left:1215px;top:841px;width:81px"></div>
<div class="t " style="left:1229.7px;top:845px;letter-spacing:-0.119px;">Очистить</div>
<div class="btn" style="left:1300px;top:841px;width:101px"></div>
<div class="t " style="left:1333.2px;top:845px;letter-spacing:-0.068px;">Добавить</div>
<svg class="a" style="left:1315px;top:846px" width="12" height="12" viewBox="0 0 12 12"><path d="M6 0.5 V11.5 M0.5 6 H11.5" stroke="#222" stroke-width="1.2"/></svg>
<div class="btn" style="left:1405px;top:841px;width:174px"></div>
<div class="t " style="left:1419.7px;top:845px;letter-spacing:-0.059px;">Записать в кол-во остатки</div>
<div class="hl" style="left:4px;top:867px;width:1577px;"></div>
<div class="btn" style="left:1120px;top:872px;width:42px"></div>
<svg class="a" style="left:1134px;top:876px" width="15" height="14" viewBox="0 0 15 14" fill="none"><path d="M2 5.8 A5.2 5.2 0 0 1 11.6 3.4" stroke="#222" stroke-width="1.2"/><path d="M12.6 0.6 V4.3 H8.9 Z" fill="#222"/><path d="M12.8 8 A5.2 5.2 0 0 1 3.2 10.4" stroke="#4fb3ee" stroke-width="1.2"/><path d="M2.2 13.2 V9.5 H5.9 Z" fill="#4fb3ee"/></svg>
<div class="btn" style="left:1166px;top:872px;width:106px"></div>
<svg class="a" style="left:1181px;top:876px" width="13" height="14" viewBox="0 0 13 14" fill="none"><path d="M1.7 7 H10.9 V11" stroke="#4fb3ee" stroke-width="1.1"/><path d="M0.6 3 Q0.6 0.8 2.8 0.8 H8.2 L11.9 4.2 V10.8 Q11.9 13 9.7 13 H2.8 Q0.6 13 0.6 10.8 Z" stroke="#333" stroke-width="1.1"/><path d="M1.7 11 V7" stroke="#4fb3ee" stroke-width="1.1"/></svg>
<div class="t g" style="left:1199.3px;top:876px;letter-spacing:-0.305px;">Сохранить</div>
<div class="btn" style="left:1276px;top:872px;width:101px"></div>
<svg class="a" style="left:1291px;top:876px" width="12" height="14" viewBox="0 0 12 14" fill="none"><path d="M0.3 3 H11.7 M4 3 V1 H8 V3" stroke="#4fb3ee" stroke-width="1.1"/><path d="M2.3 5 V12.6 H9.8 V5" stroke="#222" stroke-width="1.2" stroke-linejoin="round"/></svg>
<div class="t g" style="left:1309px;top:876px;letter-spacing:-0.205px;">Отменить</div>
<div class="btn" style="left:1486px;top:872px;width:93px"></div>
<svg class="a" style="left:1501px;top:877px" width="12" height="12" viewBox="0 0 12 12"><path d="M0.8 0.8 L11.2 11.2 M11.2 0.8 L0.8 11.2" stroke="#222" stroke-width="1.2"/></svg>
<div class="t " style="left:1519.5px;top:876px;letter-spacing:-0.246px;">Закрыть</div>
<div class="a" style="left:1380px;top:870px;width:103px;height:25px;border:3px solid #fe0000;border-radius:3px;background:#fff"></div>
<svg class="a" style="left:1395px;top:877px" width="13" height="11" viewBox="0 0 13 11"><path d="M0.8 6 L4.2 9.8 L12.2 0.8" fill="none" stroke="#222" stroke-width="1.2"/></svg>
<div class="t " style="left:1415px;top:876px;letter-spacing:-0.174px;">Провести</div>
</body></html>
